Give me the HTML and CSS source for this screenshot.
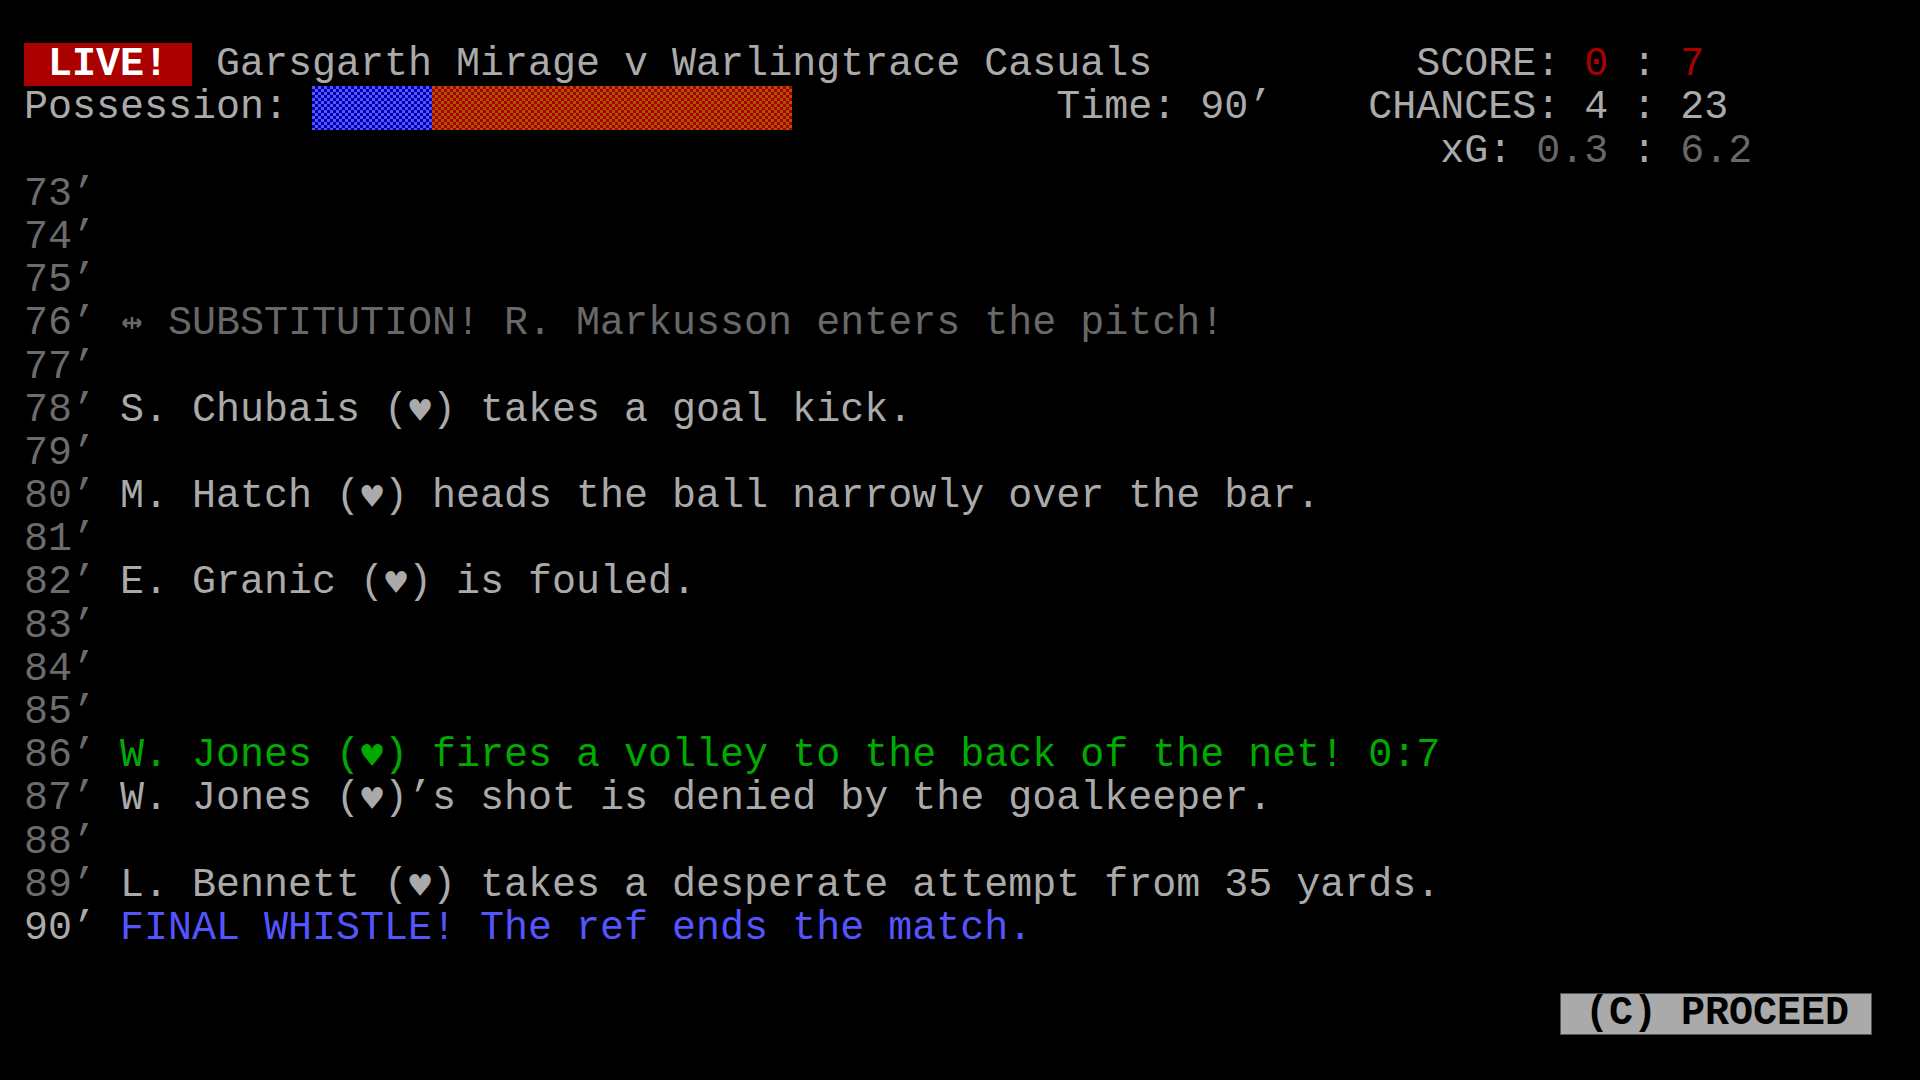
FILE: index.html
```html
<!DOCTYPE html>
<html>
  <head>
    <meta charset="UTF-8">
    <title>Match Day</title>
    <link rel="stylesheet" href="styles.css">
  </head>
  <body>
    <div class="screen">
      <header class="status">
        <div class="match"><span class="live"> LIVE! </span> Garsgarth Mirage v Warlingtrace Casuals</div>
        <div class="tally">  SCORE: <span class="goals">0</span> : <span class="goals">7</span></div>

        <div class="possession">
          <span class="label">Possession: </span>
          <span class="bar">
            <span class="home" style="width: 5ch"></span>
            <span class="away" style="width: 15ch"></span>
          </span>
        </div>
        <div class="clock">Time: 90’</div>
        <div class="tally">CHANCES: 4 : 23</div>

        <div class="tally xg">   xG: <span class="dim">0.3</span> : <span class="dim">6.2</span></div>
      </header>

      <ol class="log">
        <li><span class="min">73’</span></li>
        <li><span class="min">74’</span></li>
        <li><span class="min">75’</span></li>
        <li class="sub"><span class="min">76’</span><span class="msg"><svg class="swap" width="24" height="43" viewBox="0 0 24 43"><path d="M3 21h18M12 15v12M3 21l4-4M3 21l4 4M21 21l-4-4M21 21l-4 4" /></svg> SUBSTITUTION! R. Markusson enters the pitch!</span></li>
        <li><span class="min">77’</span></li>
        <li><span class="min">78’</span><span class="msg">S. Chubais (<span class="heart">♥</span>) takes a goal kick.</span></li>
        <li><span class="min">79’</span></li>
        <li><span class="min">80’</span><span class="msg">M. Hatch (<span class="heart">♥</span>) heads the ball narrowly over the bar.</span></li>
        <li><span class="min">81’</span></li>
        <li><span class="min">82’</span><span class="msg">E. Granic (<span class="heart">♥</span>) is fouled.</span></li>
        <li><span class="min">83’</span></li>
        <li><span class="min">84’</span></li>
        <li><span class="min">85’</span></li>
        <li class="goal"><span class="min">86’</span><span class="msg">W. Jones (<span class="heart">♥</span>) fires a volley to the back of the net! 0:7</span></li>
        <li><span class="min">87’</span><span class="msg">W. Jones (<span class="heart">♥</span>)’s shot is denied by the goalkeeper.</span></li>
        <li><span class="min">88’</span></li>
        <li><span class="min">89’</span><span class="msg">L. Bennett (<span class="heart">♥</span>) takes a desperate attempt from 35 yards.</span></li>
        <li class="final"><span class="min">90’</span><span class="msg">FINAL WHISTLE! The ref ends the match.</span></li>
      </ol>

      <footer class="actions">
        <button class="proceed"> (C) PROCEED </button>
      </footer>
    </div>
  </body>
</html>
```

FILE: styles.css
```css
/* 80x25 text screen: every cell is 24px (1ch) wide and one row tall */
:root {
  --cell: 24px;
  --row: 43.2px;
}

body {
  margin: 0;
  width: 1920px;
  height: 1080px;
  overflow: hidden;
  background: #000;
  color: #aaa;
  font: 40px/43.2px "Liberation Mono", "DejaVu Sans Mono", monospace;
}

.screen {
  padding: var(--row) var(--cell) 0 var(--cell);
}

/* spaces are part of the layout in text mode */
.match, .tally, .clock, .label, .min, .msg {
  white-space: pre;
}

.status {
  display: grid;
  grid-template-columns: 43ch 13ch 1fr;
  grid-auto-rows: var(--row);
}
.match {
  grid-column: span 2;
}
.live {
  display: inline-block;
  background: #aa0000;
  color: #fff;
  font-weight: bold;
}
.goals {
  color: #aa0000;
}
.dim {
  color: #686868;
}
.xg {
  grid-column: 3;
}

.possession {
  display: flex;
}
.bar {
  display: flex;
  height: var(--row);
}
.bar>span {
  height: 100%;
}
/* dithered halves, as a text-mode shade character would draw them */
.home {
  background: repeating-conic-gradient(#0000aa 0 25%, #5555ff 0 50%) 0 0 / 6px 6px;
}
.away {
  background: repeating-conic-gradient(#aa0000 0 25%, #aa5500 0 50%) 0 0 / 6px 6px;
}

.log {
  list-style: none;
  margin: 0;
  padding: 0;
}
.log>li {
  display: grid;
  grid-template-columns: 4ch 1fr;
  height: var(--row);
}
.msg {
  height: var(--row);
  overflow: hidden;
}
.min {
  color: #6c6c6c;
}
.heart {
  display: inline-block;
  vertical-align: top;
  width: var(--cell);
  height: var(--row);
  line-height: var(--row);
  text-align: center;
  font-family: "DejaVu Sans Mono", monospace;
  font-size: 36px;
}
.swap {
  vertical-align: top;
  fill: none;
  stroke: currentColor;
  stroke-width: 2.5;
}
.sub .msg {
  color: #686868;
}
.goal .msg {
  color: #00aa00;
}
.final .min {
  color: #aaa;
}
.final .msg {
  color: #5555ff;
}

.actions {
  display: flex;
  justify-content: flex-end;
  margin-top: var(--row);
  padding-right: var(--cell);
}
.proceed {
  width: 13ch;
  height: 42px;
  padding: 0;
  border: 1px solid #555;
  background: #aaa;
  color: #000;
  font: inherit;
  font-weight: bold;
  line-height: 40px;
  white-space: pre;
}
```
